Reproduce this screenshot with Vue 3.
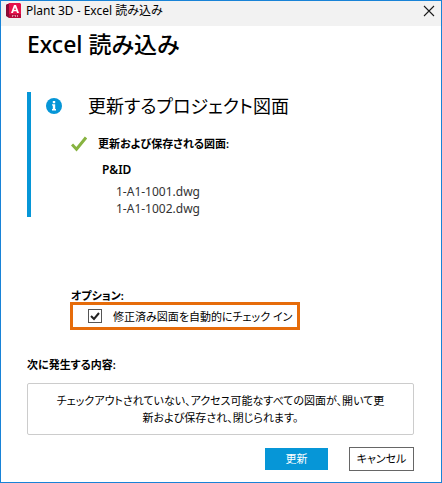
<script setup>
import { ref } from 'vue'

const drawings = ['1-A1-1001.dwg', '1-A1-1002.dwg']
const autoCheckIn = ref(true)
</script>

<template>
  <div class="dialog">
    <header class="titlebar">
      <svg class="titlebar__logo" viewBox="0 0 15 16" aria-hidden="true">
        <path d="M1 1h3v14H3L0 13V2z" fill="#8a0b35" />
        <path d="M2 0h12l1 1v14H3V1z" fill="#e5124b" />
        <path d="M3 11h12v4H3z" fill="#b80b3b" />
        <path d="M8 2h2l3 8h-2l-.6-1.700H7.600L7 10H5zm1 2.200L8.100 7h1.800z" fill="#fff" />
        <path d="M6 12.500h1.500M8.500 12.500H10M11 12.500h1M6 13.500h1M9 13.500h1M11 13.500h1" stroke="#e9a5b7" stroke-width=".8" />
      </svg>
      <span class="titlebar__text">Plant 3D - Excel 読み込み</span>
      <button type="button" class="titlebar__close" aria-label="閉じる">
        <svg viewBox="0 0 10 10" aria-hidden="true">
          <path d="M0 0l10 10M10 0L0 10" fill="none" stroke="#1b1b1b" stroke-width="1.100" />
        </svg>
      </button>
    </header>

    <main class="content">
      <h1 class="heading">Excel 読み込み</h1>

      <section class="summary">
        <div class="summary__title">
          <svg class="summary__info" viewBox="0 0 16 16" aria-hidden="true">
            <circle cx="8" cy="8" r="8" fill="#0696d7" />
            <path d="M6.800 3h2.400v2.200H6.800zM6 6.200h3.200v4.800h.8v1.500H6V11h.8V7.500H6z" fill="#fff" />
          </svg>
          <h2>更新するプロジェクト図面</h2>
        </div>
        <div class="summary__status">
          <svg class="summary__check" viewBox="0 0 16 16" aria-hidden="true">
            <path d="M1 8.500L5.500 13.200L15 1.500" fill="none" stroke="#87b340" stroke-width="3" />
          </svg>
          <h3>更新および保存される図面:</h3>
        </div>
        <h4 class="summary__group">P&amp;ID</h4>
        <ul class="summary__files">
          <li v-for="name in drawings" :key="name">{{ name }}</li>
        </ul>
      </section>

      <section class="options">
        <h3>オプション:</h3>
        <label class="options__item">
          <input v-model="autoCheckIn" type="checkbox" />
          <span>修正済み図面を自動的にチェック イン</span>
        </label>
      </section>

      <section class="next">
        <h3>次に発生する内容:</h3>
        <p class="next__text">
          チェックアウトされていない、アクセス可能なすべての図面が、開いて更新および保存され、閉じられます。
        </p>
      </section>

      <footer class="actions">
        <button type="button" class="button button--primary">更新</button>
        <button type="button" class="button">キャンセル</button>
      </footer>
    </main>
  </div>
</template>

<style>
body {
  margin: 0;
}
</style>

<style scoped>
.dialog {
  box-sizing: border-box;
  min-height: 100vh;
  border: 1px solid #1883d7;
  background: #fff;
  color: #000;
  font-family: 'Noto Sans', 'Noto Sans CJK JP', sans-serif;
  font-size: 11px;
  line-height: 17px;
  font-feature-settings: 'palt';
}

h1,
h2,
h3,
h4,
p,
ul {
  margin: 0;
  padding: 0;
}

h3,
h4 {
  font-size: 11px;
  font-weight: 600;
}

.titlebar {
  display: flex;
  align-items: center;
  height: 25px;
  padding: 0 7px 0 5px;
  background: #f2f2f2;
}

.titlebar__logo {
  width: 15px;
  height: 16px;
  margin-bottom: 6px;
}

.titlebar__text {
  margin: 0 auto 6px 5px;
  font-size: 12px;
}

.titlebar__close {
  display: flex;
  margin-bottom: 6px;
  padding: 0;
  border: 0;
  background: none;
}

.titlebar__close svg {
  width: 10px;
  height: 10px;
  overflow: visible;
}

.content {
  padding: 0 27px 11px 26px;
}

.heading {
  padding-top: 3px;
  font-size: 23px;
  font-weight: 500;
  line-height: 30px;
}

.summary {
  box-sizing: border-box;
  min-height: 125px;
  margin-top: 33px;
  border-left: 4px solid #0696d7;
}

.summary__title {
  display: flex;
  align-items: center;
  gap: 26px;
  padding-left: 15px;
}

.summary__info,
.summary__check {
  width: 16px;
  height: 16px;
  flex: none;
}

.summary__title h2 {
  font-size: 18px;
  font-weight: 400;
  line-height: 28px;
}

.summary__status {
  display: flex;
  align-items: center;
  gap: 11px;
  margin-top: 15px;
  padding-left: 40px;
}

.summary__group {
  margin-top: 9px;
  padding-left: 71px;
  font-size: 12px;
}

.summary__files {
  margin-top: 5px;
  padding-left: 85px;
  color: #333;
  font-size: 12px;
  list-style: none;
}

.options {
  margin: 70px 0 0 43px;
}

.options h3 {
  padding-left: 1px;
}

.options__item {
  box-sizing: border-box;
  display: flex;
  align-items: center;
  gap: 11px;
  width: fit-content;
  height: 28px;
  margin-top: -2px;
  padding: 0 5px 0 15px;
  border: 3px solid #e66c0a;
}

.options__item input {
  box-sizing: border-box;
  appearance: none;
  width: 14px;
  height: 14px;
  margin: 0;
  border: 1px solid #555;
  background: #fff;
}

.options__item input:checked {
  background: #fff
    url("data:image/svg+xml,%3Csvg xmlns='http://www.w3.org/2000/svg' viewBox='0 0 12 12'%3E%3Cpath d='M2 6l3 3l5-6' fill='none' stroke='%23222' stroke-width='2'/%3E%3C/svg%3E")
    center / 12px no-repeat;
}

.next {
  margin-top: 26px;
}

.next__text {
  margin-top: 10px;
  padding: 8px 25px;
  border: 1px solid #ccc;
  border-radius: 2px;
  text-align: center;
}

.actions {
  display: flex;
  align-items: center;
  justify-content: flex-end;
  gap: 21px;
  margin-top: 12px;
}

.button {
  box-sizing: border-box;
  min-width: 65px;
  height: 24px;
  padding: 0 4px;
  border: 1px solid #666;
  background: #fff;
  color: #000;
  font: inherit;
  font-feature-settings: inherit;
  line-height: 20px;
}

.button--primary {
  min-width: 63px;
  height: 22px;
  border: 0;
  background: #0696d7;
  color: #fff;
}
</style>
